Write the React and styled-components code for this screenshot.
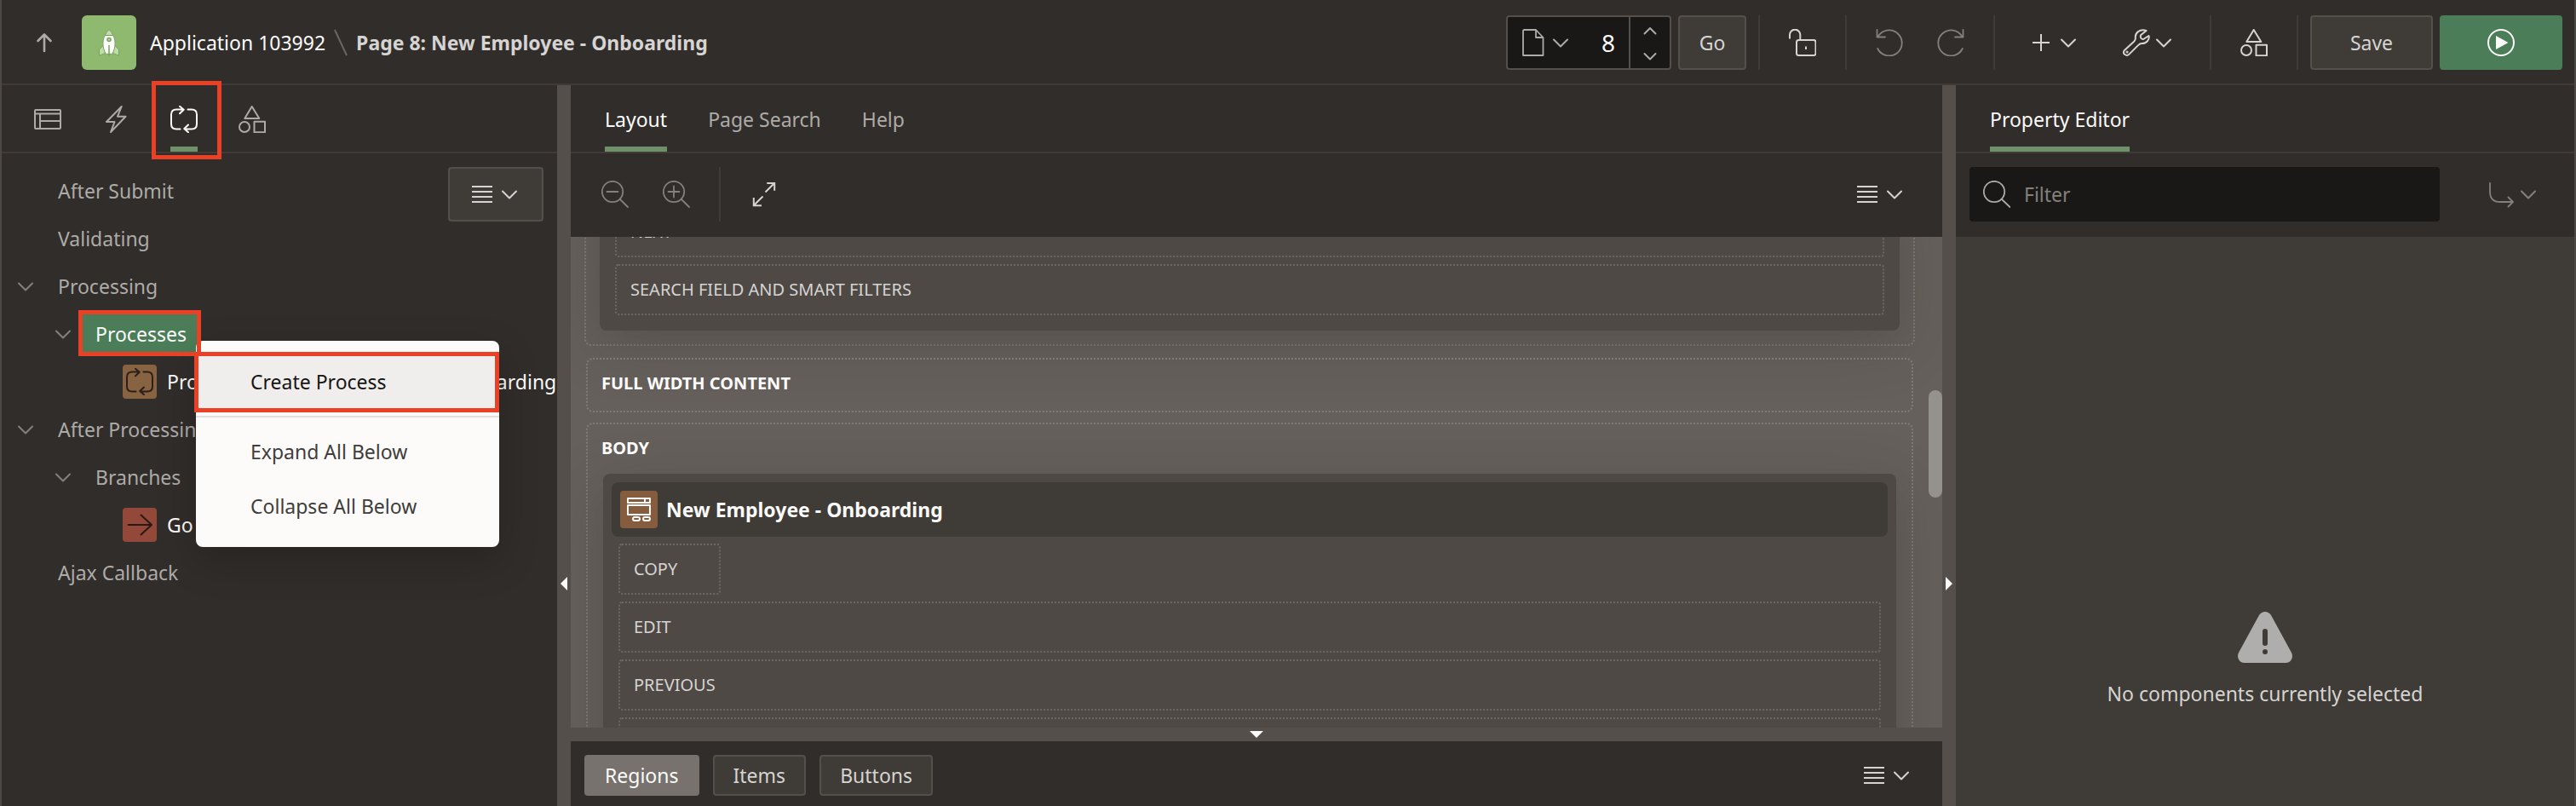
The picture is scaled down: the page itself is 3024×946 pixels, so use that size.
import React, { useLayoutEffect, useRef } from "react";
import styled, { createGlobalStyle, css, ThemeProvider } from "styled-components";

const theme = {
  bar: "#312d2a",
  line: "#403b37",
  control: "#3f3b36",
  controlLine: "#544f4a",
  field: "#191816",
  splitter: "#544f4a",
  canvas: "#65605b",
  region: "#4e4945",
  green: "#4a7d58",
  accent: "#6f9068",
  mark: "#ea4025",
  text: "#fcfbfa",
  soft: "#d6d4d2",
  muted: "#adaba8",
  dim: "#83807d",
};

const GlobalStyle = createGlobalStyle`
  *, *::before, *::after { box-sizing: border-box; }
  body { margin: 0; background: ${theme.bar}; }
  body, button, input {
    font-family: "Noto Sans", "Open Sans", sans-serif;
    font-size: 23px;
    line-height: 32px;
  }
  button { margin: 0; padding: 0; border: 0; background: none; color: inherit; cursor: pointer; }
  input { margin: 0; border: 0; background: none; outline: 0; }
  ul { list-style: none; margin: 0; padding: 0; }
`;

/* ---------- shell ---------- */

const Shell = styled.div`
  display: grid;
  grid-template-rows: 100px minmax(0, 1fr);
  height: 100vh;
  overflow: hidden;
  border: solid #4d4844;
  border-width: 0 2px;
  background: ${(p) => p.theme.bar};
  color: ${(p) => p.theme.text};
`;

const Header = styled.header`
  display: flex;
  align-items: center;
  justify-content: space-between;
  padding: 2px 14px 0;
  border-bottom: 2px solid ${(p) => p.theme.line};
`;

const Cluster = styled.div`
  display: flex;
  align-items: center;
  gap: ${(p) => p.$gap || 0}px;
`;

const Workspace = styled.main`
  display: grid;
  grid-template-columns: minmax(0, 652fr) 16px minmax(0, 1610fr) 16px minmax(0, 726fr);
  min-height: 0;
`;

const Panel = styled.section`
  display: flex;
  flex-direction: column;
  min-width: 0;
  min-height: 0;
`;

const SideSplitter = styled.div`
  display: grid;
  grid-template-rows: 577fr 16px 253fr;
  justify-items: center;
  background: ${(p) => p.theme.splitter};
`;

const BottomSplitter = styled.div`
  display: flex;
  align-items: center;
  justify-content: center;
  height: 16px;
  flex: none;
  background: ${(p) => p.theme.splitter};
`;

const SplitterButton = styled.button`
  grid-row: 2;
  display: flex;
`;

/* ---------- icons ---------- */

const Glyph = styled.svg`
  display: block;
  flex: none;
  width: 32px;
  height: 32px;
  fill: none;
  stroke: currentColor;
  stroke-width: 2;
  stroke-linecap: round;
  stroke-linejoin: round;
`;

const paths = {
  up: <path strokeWidth="2.6" d="M16 26V7M8.500 14 16 6.500l7.500 7.500" />,
  page: <path strokeWidth="1.800" d="M5 1h14l8.500 9V31H4V2zM19 1v9h8.500" />,
  unlock: (
    <>
      <rect x="9" y="13" width="22.500" height="18" rx="2.500" />
      <path strokeLinecap="butt" d="M1 11.500V6.800a6 6 0 0 1 12.300 0V13M20 20.500v3.500" />
    </>
  ),
  undo: <path strokeWidth="1.800" d="M1.500 1v8.500H11M2.700 9a15 15 0 1 1-.5 14" />,
  redo: <path strokeWidth="1.800" d="M30.500 1v8.500H21M29.300 9a15 15 0 1 0 .5 14" />,
  plus: <path strokeLinecap="butt" d="M16 6v20M6 16h20" />,
  wrench: (
    <>
      <path d="M27.500 2 21 7.200c-.8 2.800.6 4.900 3.200 4.800L30.500 8c1.200 4.500-2.800 9.200-8 9-2.200-.1-3 .5-4.200 1.900L7.500 29.600C4.200 32.800-.8 29 1.700 25.200L13.400 14.500c1.400-1.300 1.600-2.600 1.400-4.200C14.200 4.500 20.500-.8 27.500 2Z" />
      <circle cx="5" cy="27" r=".6" />
    </>
  ),
  shapes: (
    <>
      <path d="M15.700 1 24.300 15H7.300z" />
      <circle cx="7" cy="25" r="6" />
      <rect x="18.500" y="18.700" width="12.500" height="12.500" />
    </>
  ),
  play: (
    <>
      <circle cx="16" cy="16" r="15" />
      <path stroke="none" fill="currentColor" d="M10 8v16l14.500-8z" />
    </>
  ),
  layout: <path d="M2 5h28q1 0 1 1v20q0 1-1 1H2q-1 0-1-1V6q0-1 1-1ZM1 9.500h30M7 9.500V27M7 18h24" />,
  bolt: <path d="M22.700 1 5 19h9.500L10 31l17.500-18.300H18z" />,
  loop: (
    <path d="M11.500 27.500H7q-6 0-6-6v-11q0-6 6-6h8.500M11 .8l4.700 3.900L11 9.200M20.500 4.500H25q6 0 6 6v11q0 6-6 6h-8.500M21 22.500l-4.700 4.500 4.700 4.200" />
  ),
  arrow: <path d="M2.500 16h27M17.500 4.500 30 16 17.500 27.500" />,
  list: <path strokeLinecap="butt" d="M4 7h24M4 13h24M4 19h24M4 25h24" />,
  zoomOut: <path strokeWidth="1.800" d="M22 22l9 9M6.500 13h13M13 .8a12.200 12.200 0 1 1 0 24.400 12.200 12.200 0 0 1 0-24.400" />,
  zoomIn: (
    <path strokeWidth="1.800" d="M22 22l9 9M6.500 13h13M13 6.500v13M13 .8a12.200 12.200 0 1 1 0 24.400 12.200 12.200 0 0 1 0-24.400" />
  ),
  search: <path strokeWidth="1.800" d="M22 22l9.500 9M13 .8a12.200 12.200 0 1 1 0 24.400 12.200 12.200 0 0 1 0-24.400" />,
  expand: <path strokeLinecap="butt" strokeLinejoin="miter" d="M18.500 13.500 28.800 3.200M20.300 2.900h8.900v8.900M15.500 18.500 5.200 28.800M4.800 20v9.200h9.200" />,
  bend: <path strokeWidth="1.800" d="M3 3v10q0 12 12 12h14M24.500 19.500 30 25l-5.500 5.500" />,
  form: (
    <>
      <rect x="3" y="3" width="26" height="5" />
      <path d="M23 3v5" />
      <rect x="3" y="11" width="26" height="11" />
      <rect x="9" y="25" width="8" height="4" rx="2" />
      <rect x="21" y="25" width="8" height="4" rx="2" />
    </>
  ),
};

const chevrons = {
  down: "M8 12.500l8 8 8-8",
  stepDown: "M9.500 13l6.500 6.500 6.500-6.500",
  stepUp: "M9.500 19.500l6.500-6.500 6.500 6.500",
};

const Icon = ({ name }) => (
  <Glyph viewBox="0 0 32 32" aria-hidden="true">
    {paths[name]}
  </Glyph>
);

const Chevron = ({ kind = "down" }) => (
  <Glyph viewBox="0 0 32 32" aria-hidden="true">
    <path d={chevrons[kind]} />
  </Glyph>
);

const Pointer = styled.svg`
  display: block;
  fill: ${(p) => p.theme.text};
`;

const Rocket = () => (
  <svg width="32" height="32" viewBox="0 0 32 32" aria-hidden="true">
    <g stroke="#76a35a" strokeWidth="1">
      <path fill="#bfdcab" d="M9.500 19 4.500 24.300v7l7-3zM22.500 19l5 5.300v7l-7-3z" />
      <path fill="#fdfdfb" d="M11.300 7.500C8 13 8 22 12.300 29.300h7.400C24 22 24 13 20.700 7.500z" />
      <path fill="#bfdcab" d="M16 .5q3.500 3 4.800 7h-9.600Q12.500 3.500 16 .5z" />
      <circle cx="16" cy="12.400" r="2" fill="#bfdcab" strokeWidth="1.500" />
      <path strokeWidth="1.500" d="M16 19v13" />
    </g>
  </svg>
);

/* ---------- controls ---------- */

const PlainButton = styled.button`
  display: flex;
  align-items: center;
  justify-content: center;
  flex: none;
  width: ${(p) => p.$width || 72}px;
  height: 64px;
  color: ${(p) => p.theme[p.$tone || "soft"]};
`;

const BoxButton = styled(PlainButton)`
  border: 2px solid ${(p) => p.theme.controlLine};
  border-radius: 4px;
  background: ${(p) => p.theme.control};
`;

const RunButton = styled(PlainButton)`
  border-radius: 4px;
  background: ${(p) => p.theme.green};
  color: ${(p) => p.theme.text};
`;

const Divider = styled.span`
  flex: none;
  width: 2px;
  height: 64px;
  margin: 0 14px;
  background: ${(p) => p.theme.line};
`;

const AppBadge = styled.a`
  display: grid;
  place-items: center;
  width: 64px;
  height: 64px;
  margin: 0 16px 0 8px;
  border-radius: 6px;
  background: #8fb96f;
`;

const Crumbs = styled.nav`
  display: flex;
  align-items: center;
  gap: 10px;
  white-space: nowrap;
`;

const CrumbLink = styled.a`
  color: ${(p) => p.theme.text};
  text-decoration: none;
`;

const CrumbHere = styled.strong`
  color: ${(p) => p.theme.soft};
  font-weight: 700;
`;

const PageFinder = styled.div`
  display: flex;
  width: 194px;
  height: 64px;
  margin-right: 8px;
  border: 2px solid ${(p) => p.theme.controlLine};
  border-radius: 4px;
  background: ${(p) => p.theme.field};
  color: ${(p) => p.theme.muted};
`;

const PagePicker = styled.button`
  display: flex;
  align-items: center;
  padding-left: 14px;
`;

const PageNumber = styled.input`
  flex: 1;
  min-width: 0;
  padding: 0 16px 0 0;
  color: ${(p) => p.theme.text};
  font-size: 28px;
  text-align: right;
`;

const Stepper = styled.div`
  display: flex;
  flex-direction: column;
  justify-content: center;
  width: 48px;
  border-left: 2px solid ${(p) => p.theme.controlLine};
`;

const Step = styled.button`
  display: grid;
  place-items: center;
  height: 30px;
`;

const TabBar = styled.div`
  display: flex;
  flex: none;
  height: 80px;
  padding: 0 ${(p) => p.$pad}px;
  border-bottom: 2px solid ${(p) => p.theme.line};
`;

const Tab = styled.button`
  position: relative;
  padding: 0 24px;
  color: ${(p) => (p.$active ? p.theme.text : p.theme.muted)};
`;

const TabLabel = styled.span`
  display: flex;
  align-items: center;
  height: 78px;
  padding-top: 2px;
  white-space: nowrap;
  ${(p) => p.$active && css`box-shadow: inset 0 -6px ${p.theme.accent};`}
`;

const Toolbar = styled.div`
  display: flex;
  align-items: flex-start;
  justify-content: space-between;
  flex: none;
  height: 98px;
  padding: 16px ${(p) => p.$end || 16}px 0 16px;
`;

/* ---------- processing tree ---------- */

const TreeArea = styled.div`
  position: relative;
  flex: 1;
  padding-top: 16px;
`;

const TreeMenu = styled.div`
  position: absolute;
  top: 16px;
  right: 16px;
`;

const Tree = styled.ul`
  padding-left: 6px;
`;

const Node = styled.li`
  position: relative;
  display: flex;
  align-items: center;
  height: 56px;
  padding-left: ${(p) => p.$level * 44}px;
  white-space: nowrap;
`;

const NodeClip = styled.div`
  display: flex;
  align-items: center;
  gap: 12px;
  min-width: 0;
  overflow: hidden;
  padding-left: 4px;
  color: ${(p) => p.theme.text};
`;

const Toggle = styled.button`
  display: grid;
  place-items: center;
  flex: none;
  width: 44px;
  height: 44px;
  color: ${(p) => p.theme.dim};
`;

const ToggleSpace = styled.span`
  flex: none;
  width: 44px;
`;

const NodeLabel = styled.span`
  position: relative;
  padding: 8px 16px;
  border-radius: 4px;
  color: ${(p) => (p.$selected ? p.theme.text : p.theme.muted)};
  background: ${(p) => (p.$selected ? p.theme.green : "transparent")};
`;

const TypeIcon = styled.span`
  display: grid;
  place-items: center;
  flex: none;
  width: ${(p) => p.$size}px;
  height: ${(p) => p.$size}px;
  border-radius: 4px;
  background: ${(p) => p.$fill};
  color: ${(p) => p.$ink};
`;

const Mark = styled.span`
  position: absolute;
  inset: ${(p) => p.$inset};
  z-index: 3;
  border: 5px solid ${(p) => p.theme.mark};
  pointer-events: none;
`;

const ContextMenu = styled.div`
  position: absolute;
  top: 36px;
  left: 222px;
  z-index: 2;
  width: 356px;
  padding: 16px 0;
  border-radius: 8px;
  background: #fcfbfa;
  box-shadow: 0 16px 48px rgba(0, 0, 0, 0.2);
`;

const MenuItem = styled.button`
  position: relative;
  display: flex;
  align-items: center;
  width: 100%;
  height: 64px;
  padding-left: 64px;
  color: ${(p) => (p.$active ? "#161513" : "#403d3a")};
  background: ${(p) => (p.$active ? "#f0eeec" : "transparent")};
`;

const MenuRule = styled.div`
  height: 2px;
  margin: 8px 0;
  background: #e2e0de;
`;

/* ---------- page layout canvas ---------- */

const Stage = styled.div`
  position: relative;
  display: flex;
  flex: 1;
  min-height: 0;
`;

const Canvas = styled.div`
  flex: 1;
  overflow: hidden;
  padding: 0 32px 16px 16px;
  background: ${(p) => p.theme.canvas};
`;

const Slot = styled.div`
  min-height: 64px;
  margin: 0 ${(p) => p.$inset || 0}px ${(p) => p.$gap || 12}px;
  padding-bottom: ${(p) => (p.$filled ? 16 : 0)}px;
  border: 2px dotted #807b76;
  border-radius: 8px;
`;

const SlotTitle = styled.div`
  padding: 12px 16px;
  margin-bottom: 2px;
  font-size: 20px;
  font-weight: 700;
`;

const Region = styled.div`
  margin: 0 ${(p) => p.$inset}px;
  padding: ${(p) => p.$pad}px;
  border-radius: 8px;
  background: ${(p) => p.theme.region};
  box-shadow: 0 16px 64px rgba(49, 45, 42, 0.3);
`;

const RegionHeader = styled.div`
  display: flex;
  align-items: center;
  gap: 10px;
  height: 64px;
  margin-bottom: 8px;
  padding: 0 10px;
  border-radius: 8px;
  background: ${(p) => p.theme.control};
  font-weight: 700;
`;

const Positions = styled.div`
  display: flex;
  flex-direction: column;
  gap: 8px;
  padding: 0 ${(p) => p.$inset || 0}px;
`;

const Position = styled.div`
  display: flex;
  align-items: center;
  width: ${(p) => (p.$narrow ? "120px" : "auto")};
  height: 60px;
  padding: 0 16px;
  border: 2px dotted #6c6763;
  border-radius: 4px;
  color: ${(p) => p.theme.soft};
  font-size: 20px;
`;

const ScrollThumb = styled.div`
  position: absolute;
  top: 31.25%;
  right: 0;
  width: 16px;
  height: 21.875%;
  border-radius: 8px;
  background: #95918d;
`;

const Gallery = styled.div`
  display: flex;
  align-items: flex-start;
  justify-content: space-between;
  flex: none;
  height: 76px;
  padding: 16px 16px 0;
`;

const GalleryButton = styled.button`
  height: 48px;
  padding: 0 22px;
  border: 2px solid ${(p) => (p.$active ? "#77726d" : p.theme.controlLine)};
  border-radius: 4px;
  background: ${(p) => (p.$active ? "#77726d" : p.theme.control)};
  color: ${(p) => (p.$active ? p.theme.text : p.theme.soft)};
  line-height: 44px;
`;

const GalleryMenu = styled.button`
  display: flex;
  align-items: center;
  height: 48px;
  padding: 0 16px;
  color: ${(p) => p.theme.soft};
`;

/* ---------- property editor ---------- */

const FilterBox = styled.label`
  display: flex;
  align-items: center;
  flex: 1;
  gap: 16px;
  height: 64px;
  margin-right: 32px;
  padding: 0 16px;
  border-radius: 4px;
  background: ${(p) => p.theme.field};
  color: ${(p) => p.theme.muted};
`;

const FilterInput = styled.input`
  flex: 1;
  min-width: 0;
  padding: 0;
  color: ${(p) => p.theme.text};
  &::placeholder { color: ${(p) => p.theme.dim}; opacity: 1; }
`;

const EmptyState = styled.div`
  display: flex;
  flex-direction: column;
  align-items: center;
  justify-content: flex-end;
  gap: 20px;
  flex: 1;
  padding-bottom: 116px;
  background: ${(p) => p.theme.control};
  color: ${(p) => p.theme.soft};
`;

const TREE = [
  { level: 0, label: "After Submit" },
  { level: 0, label: "Validating" },
  { level: 0, label: "Processing", open: true },
  { level: 1, label: "Processes", open: true, selected: true },
  { level: 2, label: "Process form New Employee - Onboarding", icon: "loop", fill: "#886341", ink: "#2a201a" },
  { level: 0, label: "After Processing", open: true },
  { level: 1, label: "Branches", open: true },
  { level: 2, label: "Go To Page 7", icon: "arrow", fill: "#92493a", ink: "#2a1815" },
  { level: 0, label: "Ajax Callback" },
];

const MenuGlyphs = ({ name = "list" }) => (
  <>
    <Icon name={name} />
    <Chevron />
  </>
);

function TreeNode({ item }) {
  return (
    <Node $level={item.level}>
      {item.open ? (
        <Toggle aria-label={`Collapse ${item.label}`}>
          <Chevron />
        </Toggle>
      ) : (
        <ToggleSpace />
      )}
      {item.icon ? (
        <NodeClip>
          <TypeIcon $size={40} $fill={item.fill} $ink={item.ink}>
            <Icon name={item.icon} />
          </TypeIcon>
          {item.label}
        </NodeClip>
      ) : (
        <NodeLabel $selected={item.selected}>
          {item.label}
          {item.selected && <Mark $inset="-4px -1px -2px -4px" />}
        </NodeLabel>
      )}
      {item.selected && (
        <ContextMenu role="menu">
          <MenuItem role="menuitem" $active>
            Create Process
            <Mark $inset="-3px 0 -4px -2px" />
          </MenuItem>
          <MenuRule />
          <MenuItem role="menuitem">Expand All Below</MenuItem>
          <MenuItem role="menuitem">Collapse All Below</MenuItem>
        </ContextMenu>
      )}
    </Node>
  );
}

function TreePanel() {
  return (
    <Panel>
      <TabBar $pad={14}>
        {["layout", "bolt", "loop", "shapes"].map((name) => (
          <Tab key={name} $active={name === "loop"} aria-label={name}>
            <TabLabel $active={name === "loop"}>
              <Icon name={name} />
            </TabLabel>
            {name === "loop" && <Mark $inset="-5px -4px -9px 2px" />}
          </Tab>
        ))}
      </TabBar>
      <TreeArea>
        <Tree>
          {TREE.map((item) => (
            <TreeNode key={item.label} item={item} />
          ))}
        </Tree>
        <TreeMenu>
          <BoxButton $width={112} aria-label="Tree menu">
            <MenuGlyphs />
          </BoxButton>
        </TreeMenu>
      </TreeArea>
    </Panel>
  );
}

function LayoutPanel() {
  const canvas = useRef(null);
  useLayoutEffect(() => {
    canvas.current.scrollTop = 114;
  }, []);
  return (
    <Panel>
      <TabBar $pad={16}>
        {["Layout", "Page Search", "Help"].map((name) => (
          <Tab key={name} $active={name === "Layout"}>
            <TabLabel $active={name === "Layout"}>{name}</TabLabel>
          </Tab>
        ))}
      </TabBar>
      <Toolbar>
        <Cluster>
          <PlainButton $tone="dim" aria-label="Zoom out"><Icon name="zoomOut" /></PlainButton>
          <PlainButton $tone="dim" aria-label="Zoom in"><Icon name="zoomIn" /></PlainButton>
          <Divider />
          <PlainButton aria-label="Expand"><Icon name="expand" /></PlainButton>
        </Cluster>
        <PlainButton $width={112} aria-label="Layout menu"><MenuGlyphs /></PlainButton>
      </Toolbar>
      <Stage>
        <Canvas ref={canvas}>
          <Slot $filled $gap={14}>
            <SlotTitle>BREADCRUMB BAR</SlotTitle>
            <Region $inset={16} $pad={18}>
              <Positions>
                <Position>NEXT</Position>
                <Position>SEARCH FIELD AND SMART FILTERS</Position>
              </Positions>
            </Region>
          </Slot>
          <Slot $inset={2}>
            <SlotTitle>FULL WIDTH CONTENT</SlotTitle>
          </Slot>
          <Slot $filled $inset={2}>
            <SlotTitle>BODY</SlotTitle>
            <Region $inset={18} $pad={10}>
              <RegionHeader>
                <TypeIcon $size={44} $fill="#855c3d" $ink="#fcfbfa"><Icon name="form" /></TypeIcon>
                New Employee - Onboarding
              </RegionHeader>
              <Positions $inset={8}>
                <Position $narrow>COPY</Position>
                <Position>EDIT</Position>
                <Position>PREVIOUS</Position>
                <Position>NEXT</Position>
                <Position>CHANGE</Position>
              </Positions>
            </Region>
          </Slot>
        </Canvas>
        <ScrollThumb />
      </Stage>
      <BottomSplitter>
        <SplitterButton aria-label="Collapse gallery">
          <Pointer width="16" height="8" viewBox="0 0 16 8"><path d="M0 0h16L8 8z" /></Pointer>
        </SplitterButton>
      </BottomSplitter>
      <Gallery>
        <Cluster $gap={16}>
          <GalleryButton $active>Regions</GalleryButton>
          <GalleryButton>Items</GalleryButton>
          <GalleryButton>Buttons</GalleryButton>
        </Cluster>
        <GalleryMenu aria-label="Gallery menu"><MenuGlyphs /></GalleryMenu>
      </Gallery>
    </Panel>
  );
}

function PropertyPanel() {
  return (
    <Panel>
      <TabBar $pad={16}>
        <Tab $active><TabLabel $active>Property Editor</TabLabel></Tab>
      </TabBar>
      <Toolbar $end={14}>
        <FilterBox>
          <Icon name="search" />
          <FilterInput placeholder="Filter" aria-label="Filter" />
        </FilterBox>
        <PlainButton $width={112} $tone="dim" aria-label="Go to group"><MenuGlyphs name="bend" /></PlainButton>
      </Toolbar>
      <EmptyState>
        <svg width="64" height="60" viewBox="0 0 64 60" aria-hidden="true">
          <path fill="#b0aeac" d="M25 4Q28 0 32 0t7 4l24 44q2 4 0 8-2 4-7 4H8q-5 0-7-4-2-4 0-8z" />
          <path stroke="#3f3b36" strokeWidth="6" strokeLinecap="round" d="M32 23v14M32 47v.01" />
        </svg>
        No components currently selected
      </EmptyState>
    </Panel>
  );
}

export default function App() {
  return (
    <ThemeProvider theme={theme}>
      <GlobalStyle />
      <Shell>
        <Header>
          <Cluster>
            <PlainButton $tone="muted" aria-label="Up"><Icon name="up" /></PlainButton>
            <AppBadge href="#app" aria-label="Application home"><Rocket /></AppBadge>
            <Crumbs>
              <CrumbLink href="#app">Application 103992</CrumbLink>
              <svg width="16" height="32" viewBox="0 0 16 32" aria-hidden="true">
                <path stroke="#6b6661" strokeWidth="2" d="M1 1l14 30" />
              </svg>
              <CrumbHere>Page 8: New Employee - Onboarding</CrumbHere>
            </Crumbs>
          </Cluster>
          <Cluster>
            <PageFinder>
              <PagePicker aria-label="Page selector"><MenuGlyphs name="page" /></PagePicker>
              <PageNumber defaultValue="8" aria-label="Page number" />
              <Stepper>
                <Step aria-label="Next page"><Chevron kind="stepUp" /></Step>
                <Step aria-label="Previous page"><Chevron kind="stepDown" /></Step>
              </Stepper>
            </PageFinder>
            <BoxButton $width={80}>Go</BoxButton>
            <Divider />
            <PlainButton aria-label="Lock page"><Icon name="unlock" /></PlainButton>
            <Divider />
            <PlainButton $tone="dim" aria-label="Undo"><Icon name="undo" /></PlainButton>
            <PlainButton $tone="dim" aria-label="Redo"><Icon name="redo" /></PlainButton>
            <Divider />
            <PlainButton $width={112} aria-label="Create"><MenuGlyphs name="plus" /></PlainButton>
            <PlainButton $width={112} aria-label="Utilities"><MenuGlyphs name="wrench" /></PlainButton>
            <Divider />
            <PlainButton aria-label="Shared components"><Icon name="shapes" /></PlainButton>
            <Divider />
            <Cluster $gap={8}>
              <BoxButton $width={144}>Save</BoxButton>
              <RunButton $width={144} aria-label="Save and run page"><Icon name="play" /></RunButton>
            </Cluster>
          </Cluster>
        </Header>
        <Workspace>
          <TreePanel />
          <SideSplitter>
            <SplitterButton aria-label="Collapse tree">
              <Pointer width="8" height="16" viewBox="0 0 8 16"><path d="M8 0v16L0 8z" /></Pointer>
            </SplitterButton>
          </SideSplitter>
          <LayoutPanel />
          <SideSplitter>
            <SplitterButton aria-label="Collapse property editor">
              <Pointer width="8" height="16" viewBox="0 0 8 16"><path d="M0 0v16l8-8z" /></Pointer>
            </SplitterButton>
          </SideSplitter>
          <PropertyPanel />
        </Workspace>
      </Shell>
    </ThemeProvider>
  );
}
